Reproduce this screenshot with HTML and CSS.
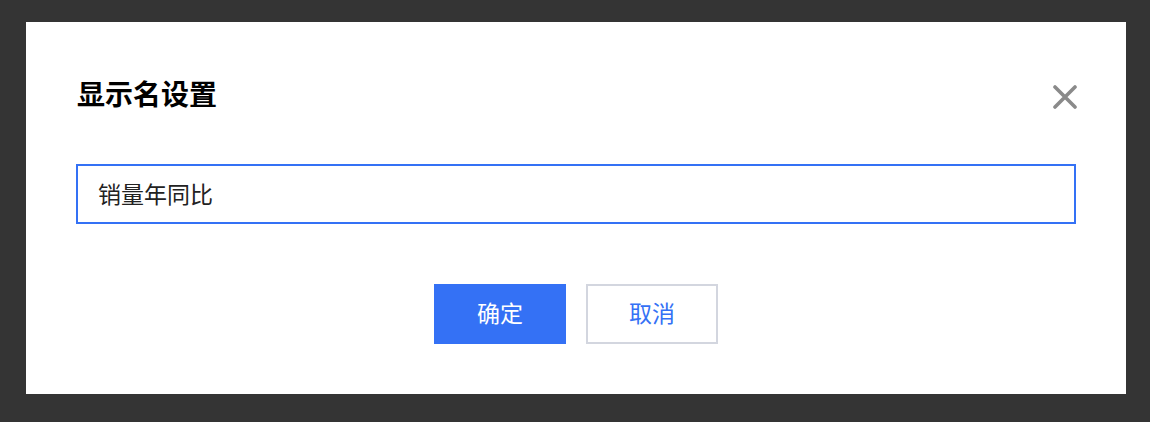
FILE: index.html
```html
<!DOCTYPE html>
<html lang="zh">
<head>
<meta charset="utf-8">
<link rel="stylesheet" href="styles.css">
</head>
<body>
<div class="overlay">
  <div class="dialog">
    <div class="header">
      <h1 class="title">显示名设置</h1>
      <button class="close" aria-label="关闭">
        <svg width="24" height="24" viewBox="0 0 24 24"><path d="M2 2L22 22M22 2L2 22" stroke="#8a8a8a" stroke-width="3.6" stroke-linecap="round"/></svg>
      </button>
    </div>
    <div class="input">销量年同比</div>
    <div class="actions">
      <button class="btn primary">确定</button>
      <button class="btn secondary">取消</button>
    </div>
  </div>
</div>
</body>
</html>
```
FILE: styles.css
```css
* { box-sizing: border-box; }
html, body { margin: 0; padding: 0; }
body {
  width: 1150px;
  height: 422px;
  background: #343434;
  font-family: "Noto Sans CJK SC", "Noto Sans", sans-serif;
  overflow: hidden;
}
.overlay {
  padding: 22px 24px 0 26px;
}
.dialog {
  width: 1100px;
  height: 372px;
  background: #fff;
  padding: 52px 50px 50px 50px;
  display: flex;
  flex-direction: column;
}
.header {
  display: flex;
  align-items: center;
  justify-content: space-between;
  height: 40px;
}
.title {
  margin: -3px 0 0 1px;
  font-size: 28px;
  line-height: 40px;
  font-weight: 700;
  color: #000;
}
.close {
  border: none;
  background: none;
  padding: 0;
  margin: 6px -1px 0 0;
  width: 24px;
  height: 24px;
  display: flex;
}
.input {
  margin-top: 50px;
  height: 60px;
  border: 2px solid #3471f5;
  padding: 0 20px 2px;
  font-size: 23px;
  line-height: 54px;
  color: #222;
}
.actions {
  margin-top: 60px;
  display: flex;
  justify-content: center;
  gap: 20px;
}
.btn {
  width: 132px;
  height: 60px;
  font-family: "Noto Sans CJK SC", sans-serif;
  font-size: 23px;
  border: none;
  padding: 0 0 5px;
}
.primary {
  background: #3471f5;
  color: #fff;
}
.secondary {
  background: #fff;
  border: 2px solid #d3d6df;
  color: #3471f5;
}
```
